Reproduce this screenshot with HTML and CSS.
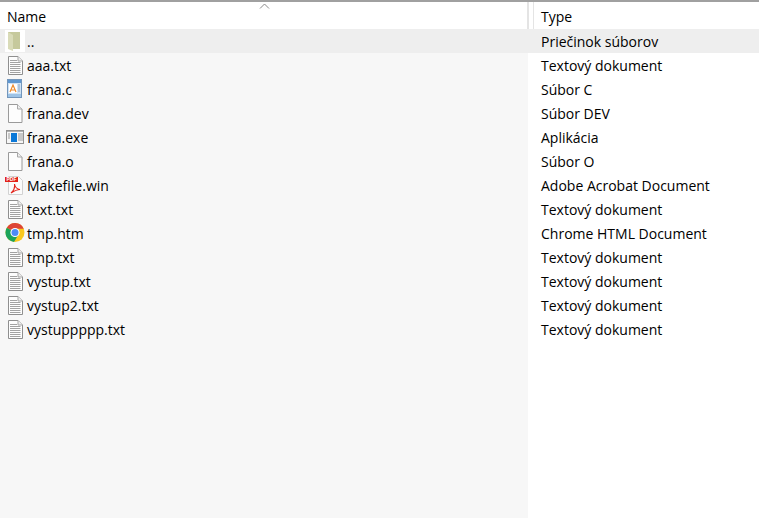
FILE: index.html
```html
<!DOCTYPE html>
<html lang="sk">
<head>
<meta charset="utf-8">
<title>Files</title>
<link rel="stylesheet" href="styles.css">
</head>
<body>
<svg class="defs" width="0" height="0" aria-hidden="true">
  <symbol id="txt" viewBox="0 0 20 22">
    <path d="M3.500 2.500H13L17.500 7V20.500H3.500Z" fill="#fdfdfd" stroke="#8f8f8f"/>
    <path d="M13 2.500V7H17.500" fill="#eee" stroke="#a5a5a5"/>
    <path d="M5 6.500H12M5 8.500H15.500M5 10.500H15.500M5 12.500H15.500M5 14.500H15.500M5 16.500H15.500M5 18.500H15.500" stroke="#a2a2a2"/>
  </symbol>
  <symbol id="blank" viewBox="0 0 20 22">
    <path d="M3.500 2.500H12.500L17 7V20.500H3.500Z" fill="#fdfdfd" stroke="#9a9a9a"/>
    <path d="M12.500 2.500V7H17" fill="#eee" stroke="#a8a8a8"/>
  </symbol>
  <symbol id="folder" viewBox="0 0 20 22">
    <rect width="20" height="22" fill="#fff"/>
    <path d="M3 2H15V19H3Z" fill="#c6c99c"/>
    <path d="M3 2L8 5V21L3 19Z" fill="#d9dbb8"/>
  </symbol>
  <symbol id="csrc" viewBox="0 0 20 22">
    <rect x="2.500" y="1.500" width="14" height="18" fill="#cfe2f4" stroke="#7396bb"/>
    <rect x="3" y="2" width="13" height="3" fill="#5f97d0"/>
    <rect x="4" y="6" width="8" height="9" fill="#fff"/>
    <path d="M5 14L8 7L11 14M6.200 12H9.800" fill="none" stroke="#ee8a2c" stroke-width="1.200"/>
    <path d="M13 7H15M13 9H15M13 11H15M13 13H15" stroke="#8aa5c4"/>
    <rect x="3" y="16" width="13" height="3" fill="#9dc3e6"/>
  </symbol>
  <symbol id="exe" viewBox="0 0 20 22">
    <rect x="1.500" y="4.500" width="17" height="13" fill="#f6f6f6" stroke="#929292"/>
    <rect x="2" y="5" width="16" height="1" fill="#b0b0b0"/>
    <rect x="6" y="7" width="6" height="9" fill="#0a78d7"/>
    <path d="M3 8H5M3 10H5M3 12H5M13 8H18M13 10H18M13 12H18M13 14H18" stroke="#9a9a9a"/>
  </symbol>
  <symbol id="chrome" viewBox="0 0 20 22">
    <circle cx="10" cy="10.500" r="9.500" fill="#f9c81e"/>
    <path d="M10 10.500L1.800 5.700A9.500 9.500 0 0 1 18.700 6.700H10Z" fill="#dd4437"/>
    <path d="M10 10.500L1.800 5.700A9.500 9.500 0 0 0 9 20L13.500 12.500Z" fill="#1ba35a"/>
    <circle cx="10" cy="10.500" r="4.600" fill="#fff"/>
    <circle cx="10" cy="10.500" r="3.500" fill="#4c8bf5"/>
  </symbol>
</svg>
<main class="explorer">
  <span class="caret"><svg width="11" height="6" viewBox="0 0 11 6"><path d="M1 5.500L5.500 1L10 5.500" fill="none" stroke="#8a8a8a"/></svg></span>
  <section class="col col-name">
    <header class="head head-name">Name</header>
    <div class="cell cell-sel"><svg class="ico"><use href="#folder"/></svg><span>..</span></div>
    <div class="cell"><svg class="ico"><use href="#txt"/></svg><span>aaa.txt</span></div>
    <div class="cell"><svg class="ico"><use href="#csrc"/></svg><span>frana.c</span></div>
    <div class="cell"><svg class="ico"><use href="#blank"/></svg><span>frana.dev</span></div>
    <div class="cell"><svg class="ico"><use href="#exe"/></svg><span>frana.exe</span></div>
    <div class="cell"><svg class="ico"><use href="#blank"/></svg><span>frana.o</span></div>
    <div class="cell"><svg class="ico" viewBox="0 0 20 22">
      <path d="M3.500 2.500H13.500L17.500 6.500V20.500H3.500Z" fill="#fbfbfb" stroke="#d2d2d2"/>
      <rect x="0" y="3" width="13" height="5" fill="#e2231a"/>
      <text x="6.500" y="7.300" class="pdf-label">PDF</text>
      <path d="M6 19C9 16.500 10 13 9.500 10C10 13 12 15 15 15.500C12 15.500 9 17 6 19Z" fill="none" stroke="#e2231a" stroke-width="1.100"/>
    </svg><span>Makefile.win</span></div>
    <div class="cell"><svg class="ico"><use href="#txt"/></svg><span>text.txt</span></div>
    <div class="cell"><svg class="ico"><use href="#chrome"/></svg><span>tmp.htm</span></div>
    <div class="cell"><svg class="ico"><use href="#txt"/></svg><span>tmp.txt</span></div>
    <div class="cell"><svg class="ico"><use href="#txt"/></svg><span>vystup.txt</span></div>
    <div class="cell"><svg class="ico"><use href="#txt"/></svg><span>vystup2.txt</span></div>
    <div class="cell"><svg class="ico"><use href="#txt"/></svg><span>vystuppppp.txt</span></div>
  </section>
  <section class="col col-type">
    <header class="head head-type">Type</header>
    <div class="cell cell-sel">Priečinok súborov</div>
    <div class="cell">Textový dokument</div>
    <div class="cell">Súbor C</div>
    <div class="cell">Súbor DEV</div>
    <div class="cell">Aplikácia</div>
    <div class="cell">Súbor O</div>
    <div class="cell">Adobe Acrobat Document</div>
    <div class="cell">Textový dokument</div>
    <div class="cell">Chrome HTML Document</div>
    <div class="cell">Textový dokument</div>
    <div class="cell">Textový dokument</div>
    <div class="cell">Textový dokument</div>
    <div class="cell">Textový dokument</div>
  </section>
</main>
</body>
</html>
```

FILE: styles.css
```css
* { box-sizing: border-box; }
html, body { margin: 0; height: 100%; background: #fff; overflow: hidden; }
.defs { position: absolute; }
.explorer {
  position: relative;
  display: grid;
  grid-template-columns: 528px 1fr;
  height: 518px;
  border-top: 2px solid #a0a0a0;
  font-family: "Open Sans", "Noto Sans", sans-serif;
  font-size: 14px;
  color: #000;
}
.caret { position: absolute; left: 259px; top: 1px; line-height: 0; }
.col-name { background: #f7f7f7; }
.col-type { background: #fff; }
.head { height: 27px; padding-top: 5px; line-height: 20px; background: #fff; }
.head-name { padding-left: 7px; border-right: 1px solid #e4e4e4; }
.head-type { padding-left: 12px; border-left: 1px solid #e4e4e4; position: relative; }
.head-type::after { content: ""; position: absolute; left: 4px; top: 0; bottom: 0; width: 1px; background: #e4e4e4; }
.cell { display: flex; align-items: center; height: 24px; white-space: nowrap; }
.col-name .cell { padding-left: 5px; gap: 2px; }
.col-type .cell { padding-left: 13px; }
.cell-sel { background: #eeeeee; }
.ico { width: 20px; height: 22px; flex: none; }
.pdf-label { font-family: "Liberation Sans", sans-serif; font-size: 5px; font-weight: 700; fill: #fff; text-anchor: middle; }
```
